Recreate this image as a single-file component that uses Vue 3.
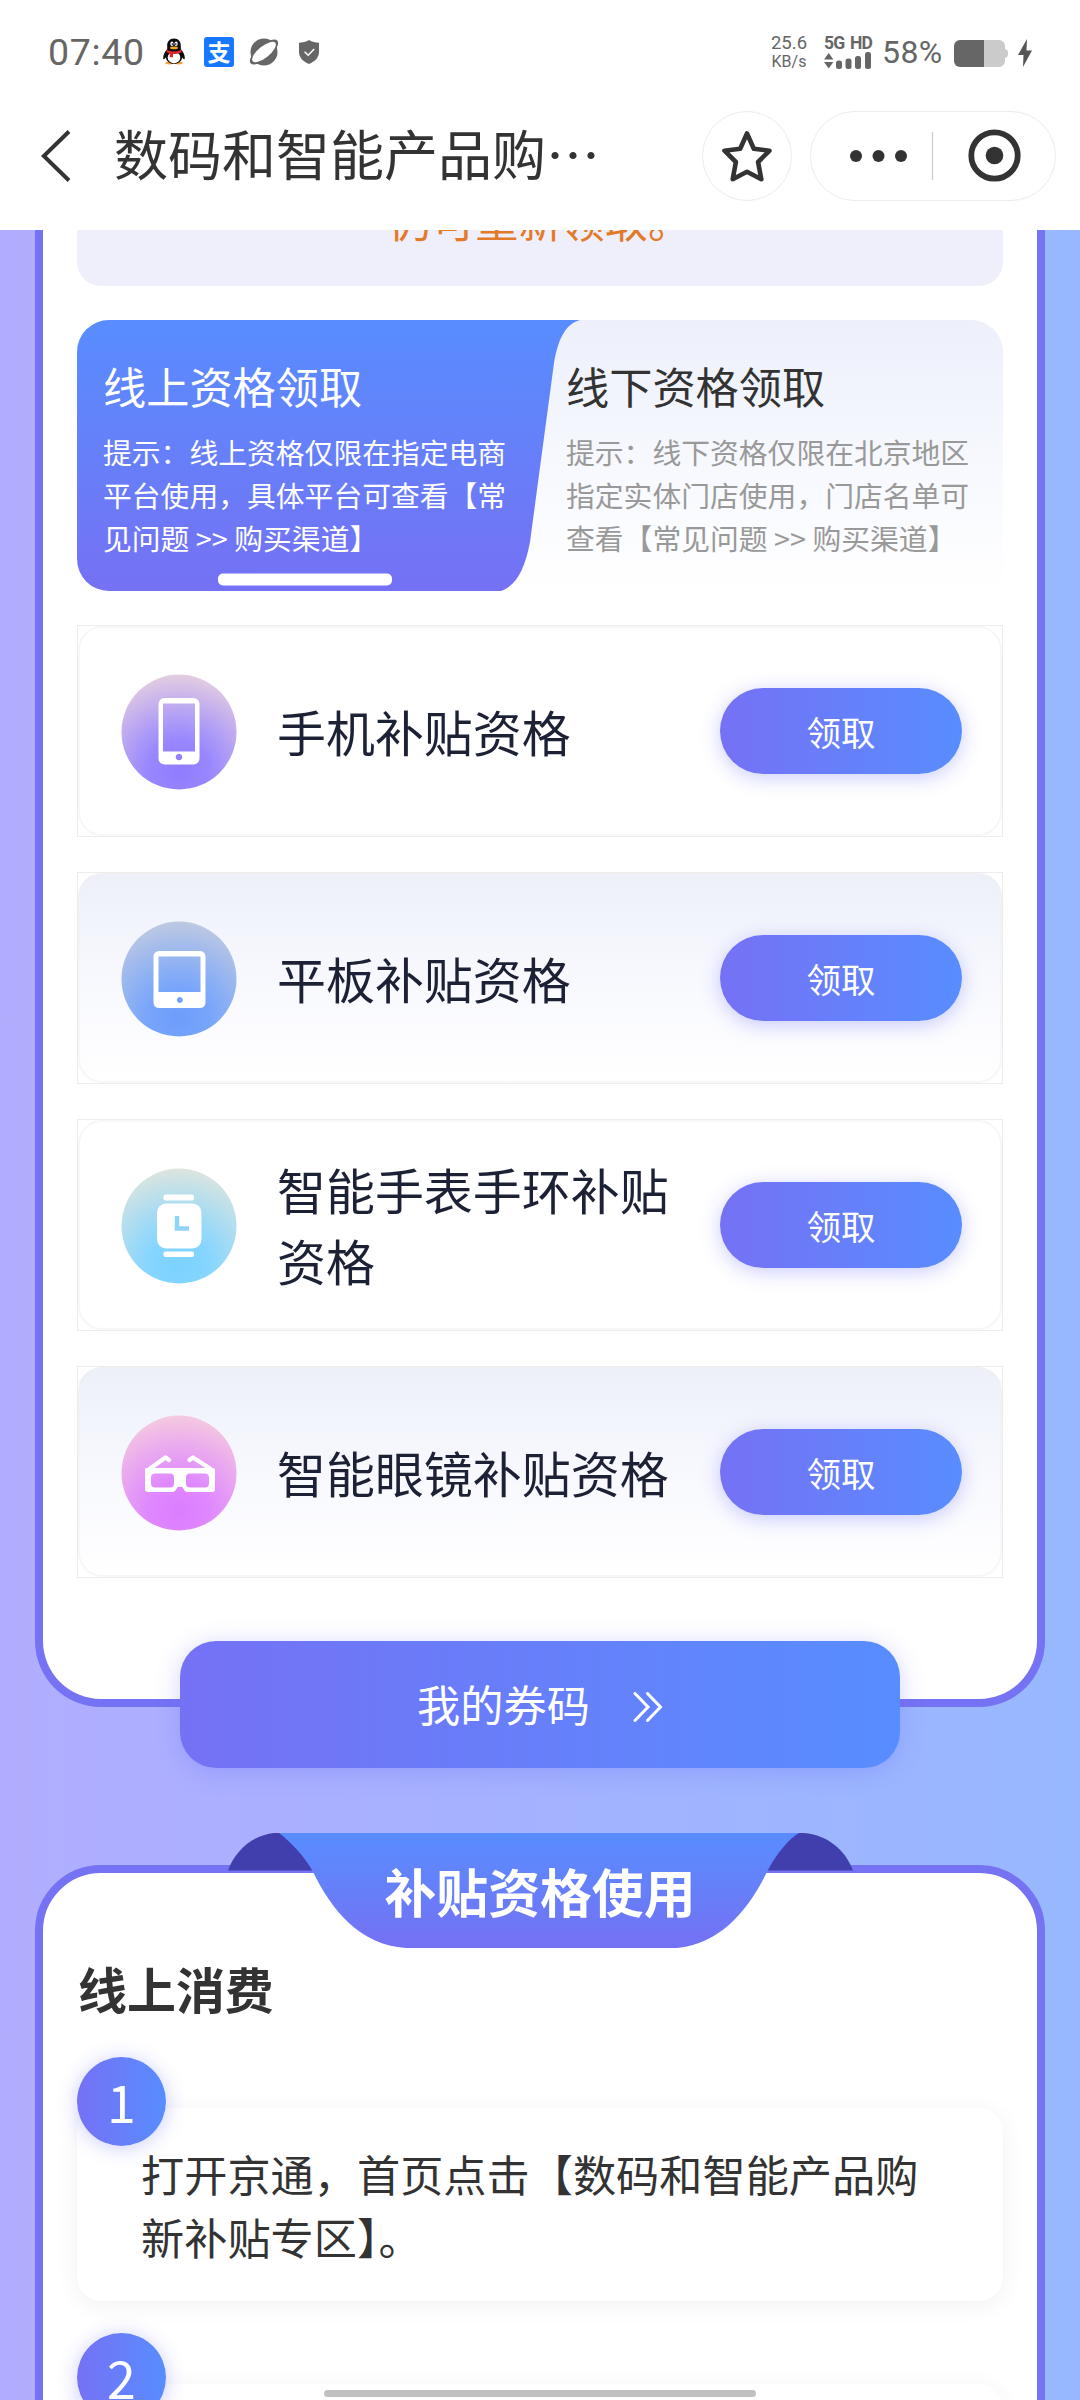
<script setup>
const items = [
  { name: ['手机补贴资格'], icon: 'phone', from: '#e9d3df', to: '#8f7cff', tinted: false },
  { name: ['平板补贴资格'], icon: 'tablet', from: '#c3cce0', to: '#6c9dfb', tinted: true },
  { name: ['智能手表手环补贴', '资格'], icon: 'watch', from: '#e3e6dc', to: '#7bd2ff', tinted: false },
  { name: ['智能眼镜补贴资格'], icon: 'glasses', from: '#f6cfdd', to: '#dc7dff', tinted: true },
]
</script>

<template>
  <div class="screen">
    <header class="top">
      <div class="status">
        <span class="time">07:40</span>
        <svg class="qq" viewBox="0 0 22 26">
          <ellipse cx="6.5" cy="24.6" rx="4.2" ry="1.4" fill="#f2a33a" />
          <ellipse cx="15.5" cy="24.6" rx="4.2" ry="1.4" fill="#f2a33a" />
          <path d="M11 0C6.6 0 4 3.2 4.2 7.5v3.2C2 13 .2 16 .2 19.2c0 2 1 2 2.600-.2C3.500 23 6.800 25.300 11 25.300s7.500-2.300 8.200-6.300c1.600 2.200 2.600 2.200 2.600.2 0-3.200-1.800-6.200-4-8.500V7.500C18 3.200 15.400 0 11 0z" fill="#0b0b0d" />
          <ellipse cx="11" cy="19" rx="6.300" ry="5.700" fill="#fff" />
          <path d="M3.800 11.200c4.500 2.400 9.900 2.400 14.400 0l.5 2.500c-3 1.500-6 1.900-8.700 1.800v3.200H6.700v-3.800l-3.300-1.200z" fill="#e3262e" />
          <ellipse cx="8.900" cy="5.300" rx="1.600" ry="2.300" fill="#fff" />
          <ellipse cx="13.100" cy="5.300" rx="1.600" ry="2.300" fill="#fff" />
          <circle cx="9.300" cy="5.600" r=".8" fill="#000" />
          <circle cx="12.800" cy="5.600" r=".8" fill="#000" />
          <ellipse cx="11" cy="9.400" rx="4" ry="1.400" fill="#f5a623" />
        </svg>
        <span class="pay">支</span>
        <svg class="planet" viewBox="0 0 30 28">
          <circle cx="15" cy="14" r="13.500" fill="#666" />
          <ellipse cx="15" cy="14" rx="17.500" ry="7" transform="rotate(-40 15 14)" fill="#666" />
          <ellipse cx="15" cy="14" rx="14.500" ry="5.700" transform="rotate(-39 15 14)" fill="#fff" />
        </svg>
        <svg class="shield" viewBox="0 0 20 24">
          <path d="M10 0c3 2 6.500 2.700 10 2.800V12c0 5.500-4 9.500-10 12C4 21.500 0 17.500 0 12V2.800C3.500 2.700 7 2 10 0z" fill="#666" />
          <path d="M5.600 11.800l3.600 3.500 6-6.300" fill="none" stroke="#fff" stroke-width="1.500" />
        </svg>
        <span class="spacer"></span>
        <span class="speed"><b>25.6</b><i>KB/s</i></span>
        <span class="net">
          <b>5G HD</b>
          <svg viewBox="0 0 48 17" width="48" height="17">
            <g fill="#666">
              <path d="M0 7.500L4.700 1l4.700 6.500zM0 10h9.400l-4.700 6.500z" />
              <rect x="12" y="8.500" width="6" height="8.500" rx="2.500" />
              <rect x="21.500" y="6.500" width="6" height="10.500" rx="2.500" />
              <rect x="31" y="4" width="6" height="13" rx="2.500" />
              <rect x="41" y="0" width="6" height="17" rx="2.500" />
            </g>
          </svg>
        </span>
        <span class="pct">58%</span>
        <svg class="battery" viewBox="0 0 54 27">
          <path d="M7 0h38a6 6 0 0 1 6 6v3c2 .5 3 1.500 3 4.500s-1 4-3 4.500v3a6 6 0 0 1-6 6H7z" fill="#cbcbcb" />
          <path d="M30 0H6a6 6 0 0 0-6 6v15a6 6 0 0 0 6 6h24z" fill="#666" />
        </svg>
        <svg class="bolt" viewBox="0 0 14 28"><path d="M9 0L0 16h5.500L5 28l9-16.500H8.500z" fill="#555" /></svg>
      </div>
      <div class="nav">
        <svg class="back" viewBox="0 0 30 52"><path d="M28 1.500L2.800 26 28 50.500" fill="none" stroke="#333" stroke-width="4" /></svg>
        <h1>数码和智能产品购…</h1>
        <span class="spacer"></span>
        <span class="fav">
          <svg viewBox="0 0 52 54" width="52" height="54">
            <path d="M26 4.500l6.800 15.300 15.700 1.900-11.400 11.300 3.200 17.200L26 42.700l-14.300 7.500 3.200-17.200L3.500 21.700l15.700-1.900z" fill="none" stroke="#333" stroke-width="4.600" stroke-linejoin="round" />
          </svg>
        </span>
        <span class="capsule">
          <svg viewBox="0 0 244 88" width="244" height="88">
            <g fill="#333"><circle cx="45" cy="44" r="6" /><circle cx="67.500" cy="44" r="6" /><circle cx="90" cy="44" r="6" /><circle cx="183.500" cy="43.500" r="8.800" /></g>
            <path d="M121.500 20v48" stroke="#ccc" stroke-width="1.200" />
            <circle cx="183.500" cy="43.500" r="23.200" fill="none" stroke="#333" stroke-width="5.800" />
          </svg>
        </span>
      </div>
    </header>

    <main class="page">
      <section class="card first">
        <div class="notice"><p>仍可重新领取。</p></div>

        <div class="tabs">
          <svg class="tab-shape" viewBox="0 0 926 271">
            <defs>
              <linearGradient id="tabOn" x1="0" y1="0" x2="0" y2="1"><stop offset="0" stop-color="#588dff" /><stop offset="1" stop-color="#7571f4" /></linearGradient>
              <linearGradient id="tabOff" x1="0" y1="0" x2="0" y2="1"><stop offset="0" stop-color="#edf0fb" /><stop offset=".5" stop-color="#f6f8fe" /><stop offset="1" stop-color="#fff" /></linearGradient>
            </defs>
            <path d="M480 0h414a32 32 0 0 1 32 32v239H400z" fill="url(#tabOff)" />
            <path d="M32 0H503C488 4 481 20 477 43L453 222C448 249 439 266 424 271H32A32 32 0 0 1 0 239V32A32 32 0 0 1 32 0z" fill="url(#tabOn)" />
            <rect x="141" y="253.500" width="174" height="12" rx="5" fill="#fff" />
          </svg>
          <div class="tab on">
            <h2>线上资格领取</h2>
            <p>提示：线上资格仅限在指定电商<br>平台使用，具体平台可查看【常<br>见问题 &gt;&gt; 购买渠道】</p>
          </div>
          <div class="tab off">
            <h2>线下资格领取</h2>
            <p>提示：线下资格仅限在北京地区<br>指定实体门店使用，门店名单可<br>查看【常见问题 &gt;&gt; 购买渠道】</p>
          </div>
        </div>

        <ul class="items">
          <li v-for="it in items" :key="it.icon">
            <div class="item" :class="{ tinted: it.tinted }">
              <svg class="icon" viewBox="0 0 116 116">
                <defs>
                  <radialGradient :id="'g-' + it.icon" cx=".5" cy=".84" r=".88">
                    <stop offset="0" :stop-color="it.to" />
                    <stop offset=".3" :stop-color="it.to" stop-opacity=".92" />
                    <stop offset="1" :stop-color="it.from" />
                  </radialGradient>
                </defs>
                <circle cx="58" cy="58" r="57.500" :fill="'url(#g-' + it.icon + ')'" />
                <path v-if="it.icon === 'phone'" fill="#fff" fill-rule="evenodd" d="M43.500 24h29a6 6 0 0 1 6 6v54.500a6 6 0 0 1-6 6h-29a6 6 0 0 1-6-6V30a6 6 0 0 1 6-6zM42 29.500v48h32v-48zM58 79.700a3.300 3.300 0 1 0 .01 0z" />
                <path v-else-if="it.icon === 'tablet'" fill="#fff" fill-rule="evenodd" d="M38 30h41a5.500 5.500 0 0 1 5.500 5.500v46A5.500 5.500 0 0 1 79 87H38a5.500 5.500 0 0 1-5.500-5.500v-46A5.500 5.500 0 0 1 38 30zM37.500 35.500V71h42V35.500zM58.800 76a3 3 0 1 0 .01 0z" />
                <g v-else-if="it.icon === 'watch'">
                  <rect x="36" y="35.500" width="44.500" height="45" rx="9" fill="#fff" />
                  <rect x="42.500" y="26.500" width="30.500" height="6" rx="2" fill="#fff" />
                  <rect x="42.500" y="83.500" width="30.500" height="5.500" rx="2" fill="#fff" />
                  <path d="M56 48v12.500h12" fill="none" stroke="#8fd5f8" stroke-width="4.500" />
                </g>
                <g v-else>
                  <path fill="#fff" fill-rule="evenodd" d="M25 53h67a2 2 0 0 1 2 2v19a3 3 0 0 1-3 3H67c-3 0-4-2-5.500-5h-5C55 75 54 77 51 77H27a3 3 0 0 1-3-3V55a2 2 0 0 1 1-2zM34 58.500a4 4 0 0 0-4 4v6a4 4 0 0 0 4 4h15a4 4 0 0 0 4-4v-6a4 4 0 0 0-4-4zM69 58.500a4 4 0 0 0-4 4v6a4 4 0 0 0 4 4h15a4 4 0 0 0 4-4v-6a4 4 0 0 0-4-4z" />
                  <path d="M29 53.500L44.500 42.500l3.500 2.500M89 53.500L72 42.500l-3.500 2.500" fill="none" stroke="#fff" stroke-width="4.300" stroke-linecap="round" stroke-linejoin="round" />
                </g>
              </svg>
              <p class="name"><span v-for="line in it.name" :key="line">{{ line }}</span></p>
              <button class="get">领取</button>
            </div>
          </li>
        </ul>
      </section>

      <button class="coupon">
        <span>我的券码</span>
        <svg viewBox="0 0 30 30" width="30" height="30"><path d="M2 1.500L15 15 2 28.500M14.500 1.500L27.500 15l-13 13.500" fill="none" stroke="#fff" stroke-width="3" stroke-linecap="round" /></svg>
      </button>

      <section class="card second">
        <div class="ribbon">
          <svg viewBox="0 0 625 115">
            <defs>
              <linearGradient id="ribbonFill" x1="0" y1="0" x2="0" y2="1"><stop offset="0" stop-color="#588dff" /><stop offset="1" stop-color="#7571f4" /></linearGradient>
            </defs>
            <path d="M0 37.500C8 16 26 2 46 0H90V37.500zM625 37.500C617 16 599 2 576 0H535V37.500z" fill="#413fae" />
            <path d="M51 0H571C560 6 548 22 540 37C521 76 494 110 449 115H178C132 112 104 78 84 37C75 22 64 10 51 0z" fill="url(#ribbonFill)" />
          </svg>
          <h2>补贴资格使用</h2>
        </div>
        <h3>线上消费</h3>
        <div class="step">
          <span class="num">1</span>
          <p>打开京通，首页点击【数码和智能产品购<br>新补贴专区】。</p>
        </div>
        <div class="step">
          <span class="num">2</span>
          <p></p>
        </div>
      </section>
      <span class="home-bar"></span>
    </main>
  </div>
</template>

<style>
body { margin: 0; }
</style>

<style scoped>
.screen {
  width: 1080px; height: 2400px; overflow: hidden;
  display: flex; flex-direction: column;
  font-family: "Noto Sans CJK SC", sans-serif; color: #333; background: #fff;
}
h1, h2, h3, p, ul { margin: 0; padding: 0; font-weight: 400; }
p, h1, h2, h3, span { white-space: nowrap; }
svg { display: block; flex: none; }
button { border: 0; padding: 0; font-family: inherit; color: #fff; }
.spacer { flex: 1; }

.top { height: 230px; flex: none; background: #fff; }
.status {
  height: 103px; padding: 0 48px; box-sizing: border-box;
  display: flex; align-items: center; font-family: Roboto, sans-serif; color: #666;
}
.time { width: 97px; font-size: 37.500px; letter-spacing: 0.7px; }
.qq { width: 22px; height: 27px; margin-left: 18px; }
.pay {
  width: 30px; height: 30px; margin-left: 19px; border-radius: 3px; background: #1677ff; color: #fff;
  font: 700 23px/29px "Noto Sans CJK SC", sans-serif; text-align: center;
}
.planet { width: 30px; height: 28px; margin-left: 15px; }
.shield { width: 20px; height: 24px; margin-left: 20px; }
.speed { width: 38px; margin-right: 16px; display: flex; flex-direction: column; align-items: center; }
.speed b { font-weight: 400; font-size: 18.500px; line-height: 20px; }
.speed i { font-style: normal; font-size: 16px; line-height: 17px; }
.net { width: 48px; margin-right: 10px; display: flex; flex-direction: column; }
.net b { font-size: 17.500px; line-height: 18px; letter-spacing: -0.9px; word-spacing: 2.500px; }
.pct { width: 64px; margin-right: 8px; font-size: 32px; letter-spacing: 0.4px; }
.battery { width: 54px; height: 27px; margin-top: 3px; }
.bolt { width: 14px; height: 28px; margin-left: 10px; margin-top: 2px; }

.nav { height: 106px; padding: 0 24px 0 41px; display: flex; align-items: center; }
.back { width: 30px; height: 52px; }
h1 { margin-left: 43px; font-size: 54px; line-height: 76px; padding-bottom: 6px; }
.fav {
  width: 88px; height: 88px; border: 1px solid #ececec; border-radius: 50%; margin-right: 18px;
  display: flex; align-items: center; justify-content: center;
}
.capsule { width: 244px; height: 88px; border: 1px solid #ececec; border-radius: 45px; }

.page {
  position: relative; flex: 1; overflow: hidden; display: flex; flex-direction: column; align-items: center;
  background: linear-gradient(90deg, #b1adfe, #97b8fe);
}
.card { width: 1010px; box-sizing: border-box; flex: none; border: 8px solid #7572f3; background: #fff; padding: 0 34px; }
.first { height: 1477px; border-top: 0; border-radius: 0 0 66px 66px; }
.notice {
  height: 56px; overflow: hidden; background: #eeeffb; border-radius: 0 0 24px 24px;
  display: flex; align-items: flex-end; justify-content: center; color: #e37a28; font-size: 43.200px;
}
.notice p { padding-bottom: 36px; }

.tabs { position: relative; height: 271px; margin-top: 34px; display: flex; }
.tab-shape { position: absolute; left: 0; top: 0; width: 926px; height: 271px; }
.tab { position: relative; width: 463px; padding: 34px 0 0 26px; box-sizing: border-box; }
.tab h2 { font-size: 43.200px; line-height: 62.500px; }
.tab p { margin-top: 13px; font-size: 28.800px; line-height: 43.200px; }
.on { color: #fff; }
.off p { color: #999; }

.items { list-style: none; margin-top: 34px; display: flex; flex-direction: column; gap: 35px; }
.items li { height: 212px; box-sizing: border-box; border: 1px solid #ededed; }
.item {
  height: 210px; box-sizing: border-box; border: 2px solid #f7f7f8; border-radius: 24px; padding: 0 38px 0 41px;
  display: flex; align-items: center;
}
.item.tinted {
  border-color: rgba(240, 240, 243, .5);
  background: linear-gradient(180deg, #edf0f9, #f7f8fe 45%, #fff) border-box;
}
.icon { width: 116px; height: 116px; margin-top: 2px; filter: blur(0.6px); }
.name { flex: 1; margin-left: 40px; display: flex; flex-direction: column; font-size: 48.960px; line-height: 70.900px; color: #1d2135; }
.get {
  width: 242px; height: 86px; border-radius: 43px; font-size: 34.560px;
  background: linear-gradient(90deg, #7571f5, #588dff); box-shadow: 0 4px 20px rgba(92, 100, 250, .32);
}

.coupon {
  position: relative; width: 720px; height: 127px; margin-top: -66px; flex: none; border-radius: 36px;
  display: flex; align-items: center; justify-content: center; gap: 43px; font-size: 43.200px;
  background: linear-gradient(90deg, #7571f5, #588dff); box-shadow: 0 4px 24px rgba(92, 100, 250, .28);
}
.coupon span { padding-bottom: 4px; }
.coupon svg { margin-top: 4px; }

.second { height: 700px; margin-top: 97px; border-radius: 66px 66px 0 0; }
.ribbon {
  position: relative; width: 625px; height: 115px; margin: -40px auto 0;
  display: flex; align-items: center; justify-content: center;
}
.ribbon svg { position: absolute; left: 0; top: 0; width: 625px; height: 115px; }
.ribbon h2 { position: relative; font-size: 51.840px; font-weight: 700; color: #fff; line-height: 75px; }
h3 { font-size: 48.960px; font-weight: 700; line-height: 71px; margin: 4px 0 0 1px; }
.step { position: relative; margin-top: 84px; }
.second h3 + .step { margin-top: 85px; }
.second .step + .step { margin-top: 83px; }
.step p {
  height: 193px; box-sizing: border-box; padding: 34px 0 0 64px; border-radius: 24px; background: #fff;
  font-size: 43.200px; line-height: 62.500px; box-shadow: 0 4px 24px rgba(0, 0, 0, .06);
}
.num {
  position: absolute; left: 0; top: -51px; width: 89px; height: 89px; border-radius: 50%;
  font-size: 51.840px; line-height: 88px; text-align: center; color: #fff;
  background: linear-gradient(90deg, #7571f5, #588dff); box-shadow: 0 2px 20px rgba(92, 100, 250, .32);
}
.home-bar { position: absolute; left: 324px; bottom: 3px; width: 432px; height: 7px; border-radius: 4px; background: #c0c0c0; }
</style>
